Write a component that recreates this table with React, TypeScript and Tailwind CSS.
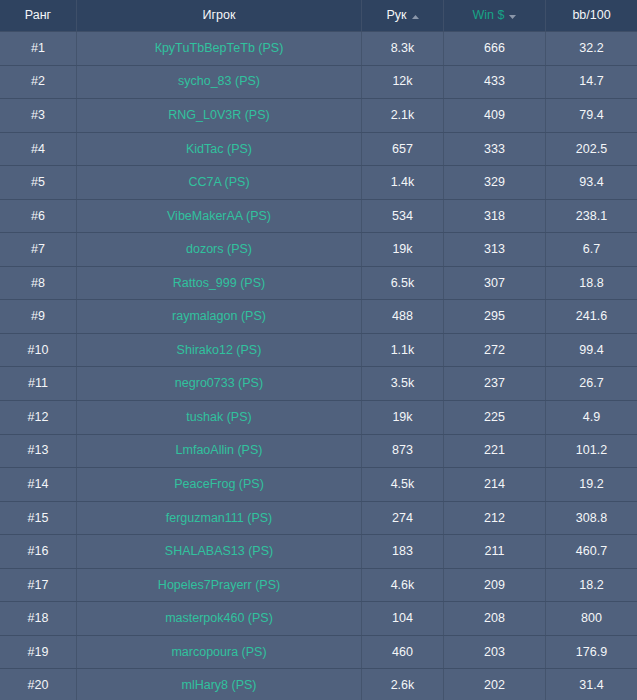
import React from 'react';

const rows = [
  ["#1", "КруТuТbВерТеТb (PS)", "8.3k", "666", "32.2"],
  ["#2", "sycho_83 (PS)", "12k", "433", "14.7"],
  ["#3", "RNG_L0V3R (PS)", "2.1k", "409", "79.4"],
  ["#4", "KidTac (PS)", "657", "333", "202.5"],
  ["#5", "CC7A (PS)", "1.4k", "329", "93.4"],
  ["#6", "VibeMakerAA (PS)", "534", "318", "238.1"],
  ["#7", "dozors (PS)", "19k", "313", "6.7"],
  ["#8", "Rattos_999 (PS)", "6.5k", "307", "18.8"],
  ["#9", "raymalagon (PS)", "488", "295", "241.6"],
  ["#10", "Shirako12 (PS)", "1.1k", "272", "99.4"],
  ["#11", "negro0733 (PS)", "3.5k", "237", "26.7"],
  ["#12", "tushak (PS)", "19k", "225", "4.9"],
  ["#13", "LmfaoAllin (PS)", "873", "221", "101.2"],
  ["#14", "PeaceFrog (PS)", "4.5k", "214", "19.2"],
  ["#15", "ferguzman111 (PS)", "274", "212", "308.8"],
  ["#16", "SHALABAS13 (PS)", "183", "211", "460.7"],
  ["#17", "Hopeles7Prayerr (PS)", "4.6k", "209", "18.2"],
  ["#18", "masterpok460 (PS)", "104", "208", "800"],
  ["#19", "marcopoura (PS)", "460", "203", "176.9"],
  ["#20", "mlHary8 (PS)", "2.6k", "202", "31.4"],
];

const cols = "grid grid-cols-[76px_285px_82px_102px_92px]";

function Caret({ up }: { up?: boolean }) {
  return (
    <svg width="7" height="4" viewBox="0 0 7 4" className="ml-[5px] mt-[2px]">
      {up ? <path d="M0 4 L3.5 0 L7 4 Z" fill="#8b97aa" /> : <path d="M0 0 L3.5 4 L7 0 Z" fill="#8b97aa" />}
    </svg>
  );
}

export default function App() {
  return (
    <div className="w-[637px] h-[700px] overflow-hidden bg-[#50617d] text-[12.5px] text-[#f4f6f8] font-['Liberation_Sans',Arial,sans-serif]">
      {/* header */}
      <div className={`${cols} h-[31px] bg-[#2f4360]`}>
        <div className="flex items-center justify-center">Ранг</div>
        <div className="flex items-center justify-center border-l border-[#3e4f69]">Игрок</div>
        <div className="flex items-center justify-center border-l border-[#3e4f69]">
          Рук<Caret up />
        </div>
        <div className="flex items-center justify-center border-l border-[#3e4f69] text-[#17a386]">
          Win $<Caret />
        </div>
        <div className="flex items-center justify-center border-l border-[#3e4f69]">bb/100</div>
      </div>

      {rows.map((r) => (
        <div key={r[0]} className={`${cols} h-[33.55px] border-t border-[#3f4f68]`}>
          <div className="flex items-center justify-center">{r[0]}</div>
          <div className="flex items-center justify-center border-l border-[#44546d] text-[#30c29e]">{r[1]}</div>
          <div className="flex items-center justify-center border-l border-[#44546d]">{r[2]}</div>
          <div className="flex items-center justify-center border-l border-[#44546d]">{r[3]}</div>
          <div className="flex items-center justify-center border-l border-[#44546d]">{r[4]}</div>
        </div>
      ))}
    </div>
  );
}
